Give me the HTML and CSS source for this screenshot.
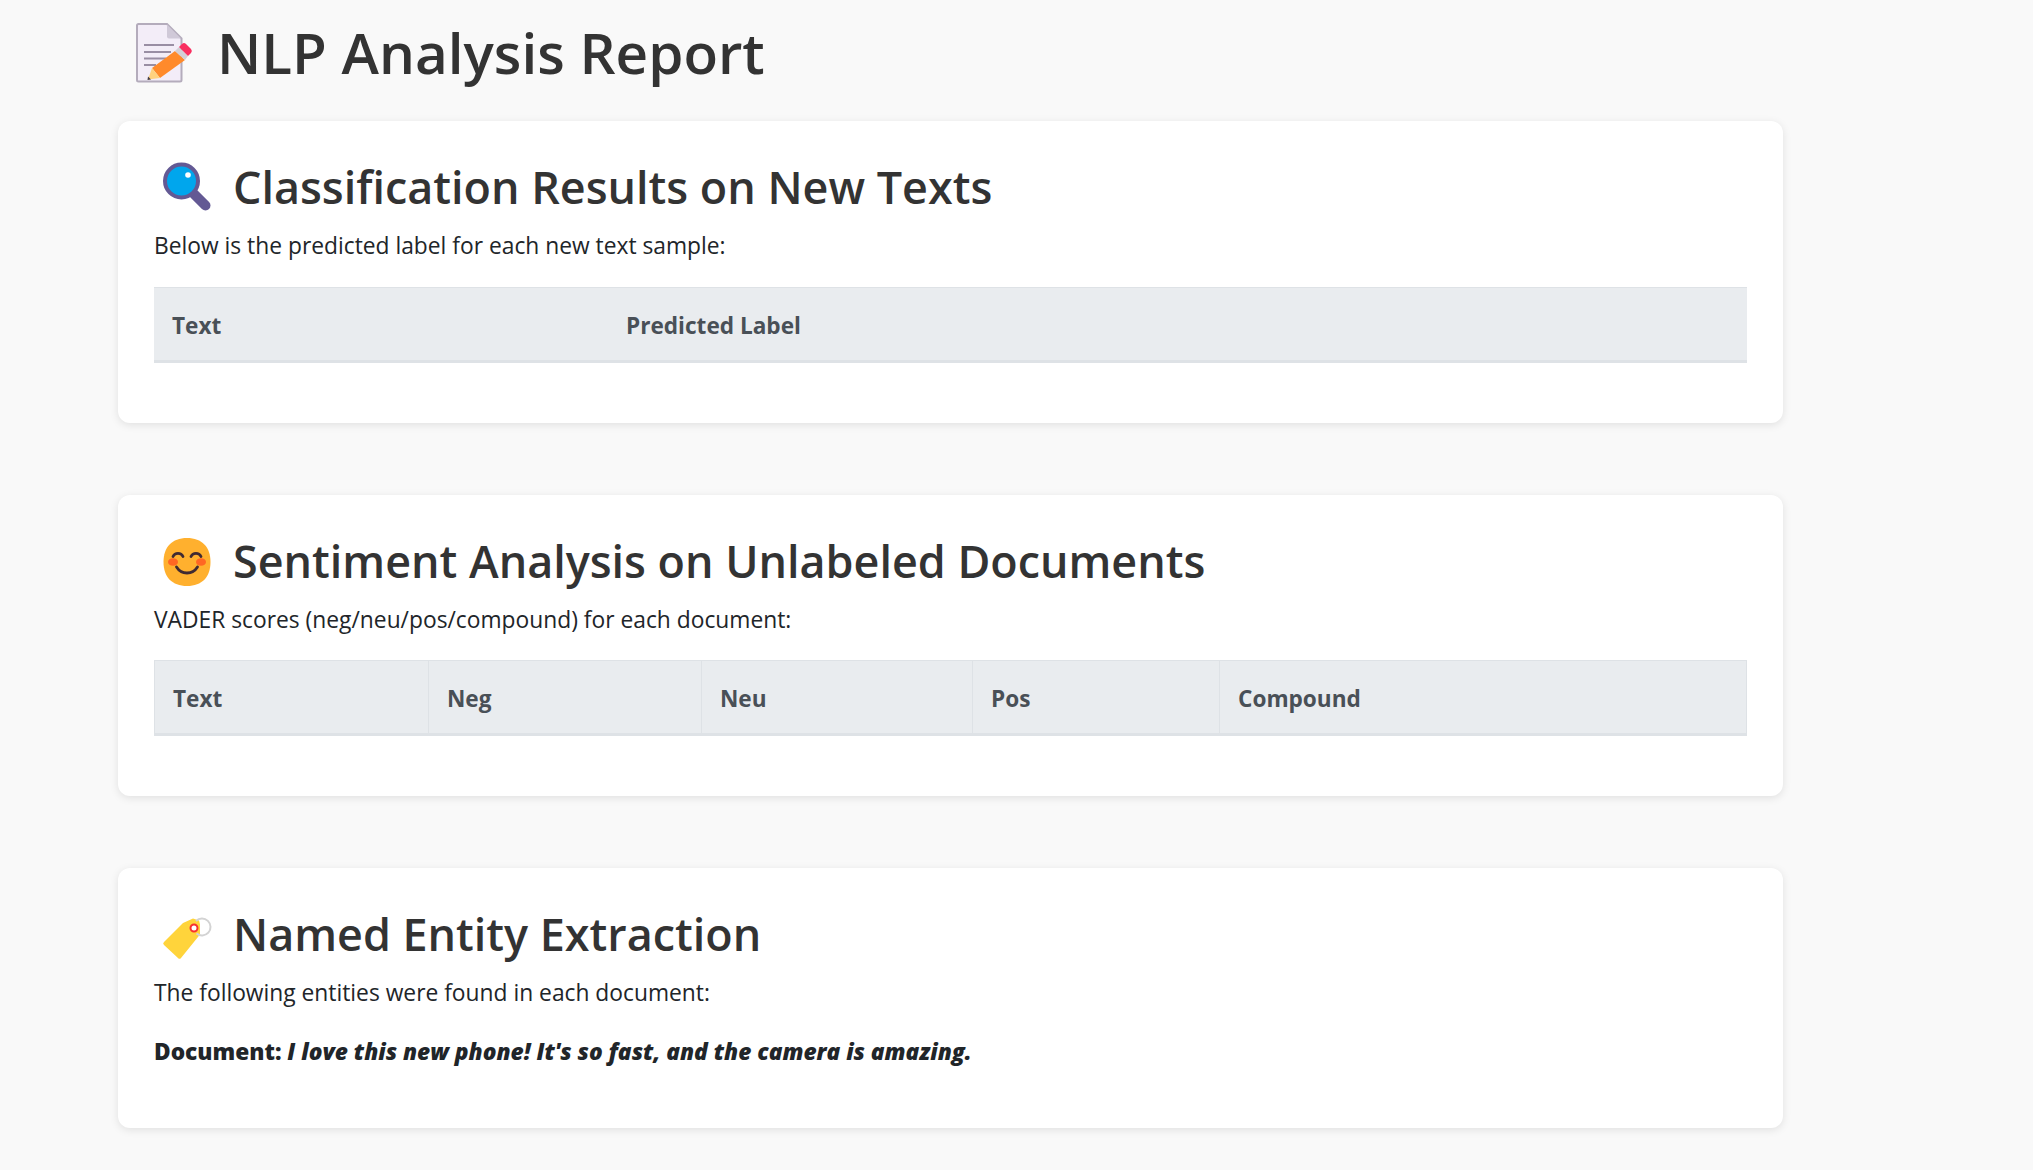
FILE: index.html
```html
<!DOCTYPE html>
<html lang="en">
<head>
<meta charset="utf-8">
<title>NLP Analysis Report</title>
<link rel="stylesheet" href="styles.css">
</head>
<body>
<main class="page">
  <h1 class="title">
    <svg class="icon icon-title" viewBox="0 0 56 60" aria-hidden="true">
      <path d="M2.500 1H31l14.500 14.500V57a1.500 1.500 0 0 1-1.500 1.500H2.500A1.500 1.500 0 0 1 1 57V2.500A1.500 1.500 0 0 1 2.500 1z" fill="#f3edf8" stroke="#b4acbc" stroke-width="2"/>
      <path d="M31 1.500L45 15.500H33a2 2 0 0 1-2-2z" fill="#d0c9d8"/>
      <path d="M8 22h30M8 29h27M8 35.500h22M8 42h12" stroke="#998ea4" stroke-width="2"/>
      <path d="M39 28l10 9-25 18-8-10z" fill="#ff8a2b"/>
      <path d="M16 45l8 10-12 1.500z" fill="#ffd27f"/>
      <path d="M12 53.500l3 3-3.500.500z" fill="#433b42"/>
      <path d="M39 28l4-4 9 9-3 4z" fill="#d3cfd6"/>
      <path d="M43 24l3-3a3 3 0 0 1 4 0l5 5a3 3 0 0 1 0 4l-3 3z" fill="#f92f60"/>
    </svg>
    <span>NLP Analysis Report</span>
  </h1>

  <section class="card">
    <h2 class="heading">
      <svg class="icon" viewBox="0 0 48 48" aria-hidden="true">
        <path d="M31 31l11.500 11.500" stroke="#635994" stroke-width="10" stroke-linecap="round"/>
        <circle cx="18.500" cy="18" r="16.500" fill="#00a6ed" stroke="#635994" stroke-width="4"/>
        <circle cx="25" cy="12" r="2.800" fill="#fff"/>
      </svg>
      <span>Classification Results on New Texts</span>
    </h2>
    <p class="lead">Below is the predicted label for each new text sample:</p>
    <table class="table table-plain">
      <thead><tr><th class="col-text">Text</th><th>Predicted Label</th></tr></thead>
    </table>
  </section>

  <section class="card">
    <h2 class="heading">
      <svg class="icon" viewBox="0 -2 48 48" aria-hidden="true">
        <path d="M24 0C39 0 47.500 9 47.500 24S39 48 24 48 .5 39 .5 24 9 0 24 0z" fill="#ffb02e"/>
        <ellipse cx="10" cy="24" rx="5" ry="3.800" fill="#ff6723"/>
        <ellipse cx="38" cy="24" rx="5" ry="3.800" fill="#ff6723"/>
        <path d="M10 18.500a5.500 5.500 0 0 1 10 0M28 18.500a5.500 5.500 0 0 1 10 0M13.500 29c5 8 16 8 21 0" fill="none" stroke="#402a32" stroke-width="2.800" stroke-linecap="round"/>
      </svg>
      <span>Sentiment Analysis on Unlabeled Documents</span>
    </h2>
    <p class="lead">VADER scores (neg/neu/pos/compound) for each document:</p>
    <table class="table table-bordered">
      <thead><tr><th class="col-a">Text</th><th class="col-b">Neg</th><th class="col-c">Neu</th><th class="col-d">Pos</th><th>Compound</th></tr></thead>
    </table>
  </section>

  <section class="card">
    <h2 class="heading">
      <svg class="icon" viewBox="0 -3 48 48" aria-hidden="true">
        <path d="M1 29L20 10l10-4.500 6 2 1 4v10L18 45a2 2 0 0 1-3 0L1 32a2 2 0 0 1 0-3z" fill="#ffd43b"/>
        <circle cx="31" cy="15" r="3.500" fill="#fff" stroke="#f8312f" stroke-width="2"/>
        <path d="M33 8a8.500 8.500 0 1 1 .5 12.500" fill="none" stroke="#d3d3d3" stroke-width="2"/>
      </svg>
      <span>Named Entity Extraction</span>
    </h2>
    <p class="lead">The following entities were found in each document:</p>
    <p class="doc"><strong>Document:</strong> <strong class="quote">I love this new phone! It's so fast, and the camera is amazing.</strong></p>
  </section>
</main>
</body>
</html>
```

FILE: styles.css
```css
* { box-sizing: border-box; }
html, body { margin: 0; padding: 0; }
body {
  background: #f9f9f9;
  color: #212529;
  font-family: "Open Sans", "Noto Sans", sans-serif;
  font-size: 22.8px;
  line-height: 36px;
}
.page {
  width: 1665px;
  margin-left: 118px;
  padding-top: 4px;
}
.title {
  display: flex;
  align-items: center;
  gap: 25px;
  margin: 0 0 20px 18px;
  height: 97px;
  font-size: 56.6px;
  font-weight: 600;
  color: #333;
  line-height: 1.2;
}
.icon { width: 48px; height: 48px; flex: none; overflow: visible; }
.icon-title { width: 56px; height: 60px; }
.card {
  background: #fff;
  border-radius: 12px;
  box-shadow: 0 2px 8px rgba(0,0,0,.1);
  padding: 36px;
  margin-bottom: 72px;
}
.heading {
  display: flex;
  align-items: center;
  gap: 22px;
  height: 57.6px;
  padding-top: 2px;
  margin: 0 0 13.5px 9px;
  font-size: 44.9px;
  font-weight: 600;
  color: #333;
  line-height: 55.6px;
}
.lead { margin: 0 0 22.5px; }
.doc { margin: 2px 0 22px; font-size: 22.7px; font-weight: 700; }
.quote { font-style: italic; }
.table {
  width: 100%;
  table-layout: fixed;
  border-collapse: collapse;
  margin: 0 0 24px;
}
.table th {
  background: #e9ecef;
  color: #495057;
  font-size: 22.6px;
  font-weight: 700;
  text-align: left;
  line-height: 36px;
  padding: 20px 18px 16px;
  border-top: 1px solid #dee2e6;
  border-bottom: 3px solid #dee2e6;
}
.table-bordered th { border-left: 1px solid #dee2e6; border-right: 1px solid #dee2e6; }
.col-text { width: 454px; }
.col-a { width: 274px; }
.col-b { width: 273px; }
.col-c { width: 271px; }
.col-d { width: 247px; }
```
